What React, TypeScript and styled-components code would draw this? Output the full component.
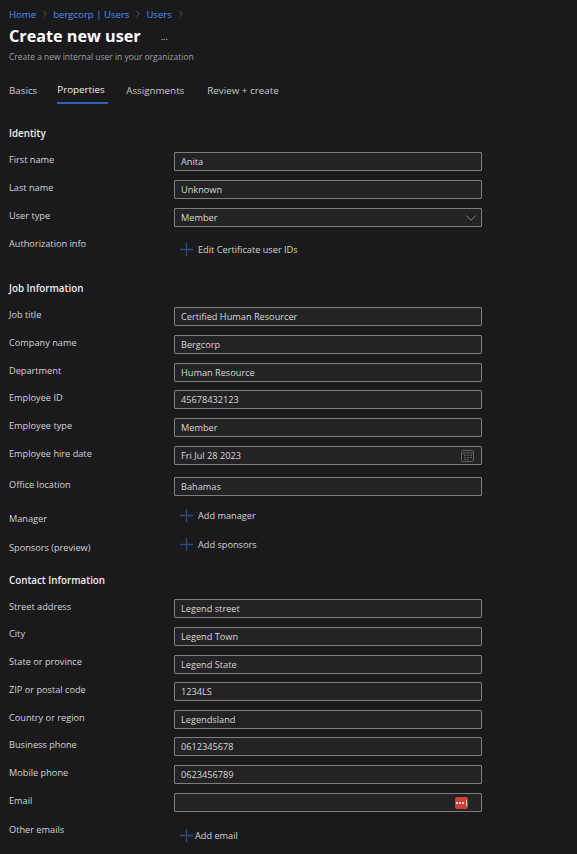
import styled, { createGlobalStyle } from 'styled-components';
import { ChevronDown, ChevronRight } from 'lucide-react';

const GlobalStyle = createGlobalStyle`
  html, body {
    margin: 0;
    background: #1a191c;
  }
  body {
    font-family: 'Open Sans', 'Noto Sans', sans-serif;
    color: #e4e4e4;
  }
`;

const Page = styled.div`
  width: 577px;
  height: 854px;
  overflow: hidden;
  background: #1a191c;
`;

const Breadcrumbs = styled.nav`
  display: flex;
  align-items: center;
  height: 14px;
  padding: 7px 0 0 9px;
  font-size: 9.6px;
  color: #4a8cf0;
`;

const Crumb = styled.span`
  display: flex;
  align-items: center;
  gap: 4px;
  margin-right: 3px;
  svg {
    color: #8a8a8a;
  }
`;

const TitleRow = styled.div`
  display: flex;
  align-items: center;
  height: 24px;
  margin-top: 3px;
  padding-left: 9px;
`;

const Title = styled.h1`
  margin: 0;
  font-size: 16.2px;
  font-weight: 700;
  color: #ffffff;
`;

const Ellipsis = styled.span`
  margin-left: 20px;
  font-size: 9px;
  line-height: 9px;
  color: #d0d0d0;
`;

const Subtitle = styled.div`
  height: 12px;
  margin-top: 3px;
  padding-left: 9px;
  font-size: 8.45px;
  line-height: 12px;
  color: #a0a0a0;
`;

const Tabs = styled.div`
  display: flex;
  height: 33px;
  margin-top: 12px;
  padding-left: 9px;
`;

const Tab = styled.div<{ $active?: boolean; $gap: number }>`
  display: flex;
  align-items: center;
  box-sizing: border-box;
  height: 29px;
  margin-right: ${p => p.$gap}px;
  padding: 3px ${p => (p.$active ? 3 : 0)}px ${p => (p.$active ? 2 : 0)}px 0;
  font-size: 9.8px;
  color: ${p => (p.$active ? '#f2f2f2' : '#c8c8c8')};
  font-weight: ${p => (p.$active ? 500 : 400)};
  border-bottom: 2px solid ${p => (p.$active ? '#2f62b8' : 'transparent')};
`;

const SectionTitle = styled.h2<{ $top: number }>`
  margin: ${p => p.$top}px 0 0;
  padding-left: 9px;
  height: 14px;
  font-size: 9.8px;
  line-height: 14px;
  font-weight: 600;
  color: #eeeeee;
`;

const Row = styled.div<{ $top: number }>`
  display: grid;
  grid-template-columns: 165px 308px;
  padding-left: 9px;
  margin-top: ${p => p.$top}px;
  height: 19px;
`;

const Label = styled.div<{ $shift: number }>`
  font-size: 9.2px;
  line-height: 14px;
  color: #d4d4d4;
  transform: translateY(${p => p.$shift}px);
`;

const Field = styled.div`
  display: flex;
  align-items: center;
  justify-content: space-between;
  box-sizing: border-box;
  height: 19px;
  padding: 0 7px 0 6px;
  background: #232225;
  border: 1px solid #7d7d7d;
  border-radius: 1px;
  font-size: 9.2px;
  color: #d8d8d8;
`;

const AddAction = styled.div<{ $gap: number }>`
  display: flex;
  align-items: center;
  gap: ${p => p.$gap}px;
  height: 19px;
  padding-left: 6px;
  font-size: 9.2px;
  color: #d4d4d4;
`;

const SelectChevron = styled(ChevronDown)`
  margin-right: -6px;
  color: #b5b5b5;
`;

const PasswordBadge = styled.span`
  display: flex;
  align-items: center;
  justify-content: center;
  gap: 1px;
  width: 13px;
  height: 12px;
  margin-right: 6px;
  border-radius: 2px;
  background: #cc3f3a;
`;

const Dot = styled.i`
  width: 2px;
  height: 2px;
  border-radius: 50%;
  background: #ffffff;
`;

const Bar = styled.i`
  width: 1px;
  height: 6px;
  margin-left: 1px;
  background: #f0b8b5;
`;

function PlusIcon() {
  return (
    <svg width="13" height="13" viewBox="0 0 13 13" fill="none" stroke="#284a85" strokeWidth="1.3">
      <path d="M6.5 0v13M0 6.5h13" />
    </svg>
  );
}

function CalendarIcon() {
  return (
    <svg width="13" height="13" viewBox="0 0 13 13" fill="none" stroke="#5f5f5f" strokeWidth="1">
      <rect x="0.5" y="1.5" width="12" height="11" rx="1" />
      <path d="M0.5 4h12M3 6.5h2M6 6.5h2M9 6.5h2M3 8.5h2M6 8.5h2M9 8.5h2M3 10.5h2M6 10.5h2" />
    </svg>
  );
}

type RowData = {
  label: string;
  top: number;
  shift?: number;
  value?: string;
  add?: string;
  addGap?: number;
  kind?: 'select' | 'date' | 'password';
};

const identity: RowData[] = [
  { label: 'First name', top: 11, value: 'Anita' },
  { label: 'Last name', top: 9, value: 'Unknown' },
  { label: 'User type', top: 9, value: 'Member', kind: 'select' },
  { label: 'Authorization info', top: 13, shift: -3, add: 'Edit Certificate user IDs' },
];

const job: RowData[] = [
  { label: 'Job title', top: 11, value: 'Certified Human Resourcer' },
  { label: 'Company name', top: 9, value: 'Bergcorp' },
  { label: 'Department', top: 9, value: 'Human Resource' },
  { label: 'Employee ID', top: 8, value: '45678432123' },
  { label: 'Employee type', top: 9, value: 'Member' },
  { label: 'Employee hire date', top: 9, value: 'Fri Jul 28 2023', kind: 'date' },
  { label: 'Office location', top: 12, value: 'Bahamas' },
  { label: 'Manager', top: 10, shift: 6, add: 'Add manager' },
  { label: 'Sponsors (preview)', top: 10, shift: 6, add: 'Add sponsors' },
];

const contact: RowData[] = [
  { label: 'Street address', top: 11, value: 'Legend street' },
  { label: 'City', top: 9, value: 'Legend Town', shift: 0 },
  { label: 'State or province', top: 9, value: 'Legend State', shift: 0 },
  { label: 'ZIP or postal code', top: 8, value: '1234LS' },
  { label: 'Country or region', top: 9, value: 'Legendsland' },
  { label: 'Business phone', top: 8, value: '0612345678' },
  { label: 'Mobile phone', top: 9, value: '0623456789' },
  { label: 'Email', top: 9, value: '', kind: 'password' },
  { label: 'Other emails', top: 14, shift: -3, add: 'Add email', addGap: 2 },
];

function FormRow({ row }: { row: RowData }) {
  return (
    <Row $top={row.top}>
      <Label $shift={row.shift ?? 1}>{row.label}</Label>
      {row.add ? (
        <AddAction $gap={row.addGap ?? 5}>
          <PlusIcon />
          {row.add}
        </AddAction>
      ) : (
        <Field>
          <span>{row.value}</span>
          {row.kind === 'select' && <SelectChevron size={18} strokeWidth={0.9} />}
          {row.kind === 'date' && <CalendarIcon />}
          {row.kind === 'password' && (
            <PasswordBadge>
              <Dot />
              <Dot />
              <Dot />
              <Bar />
            </PasswordBadge>
          )}
        </Field>
      )}
    </Row>
  );
}

export default function App() {
  return (
    <Page>
      <GlobalStyle />
      <Breadcrumbs>
        {['Home', 'bergcorp | Users', 'Users'].map(item => (
          <Crumb key={item}>
            {item}
            <ChevronRight size={10} strokeWidth={1.2} />
          </Crumb>
        ))}
      </Breadcrumbs>
      <TitleRow>
        <Title>Create new user</Title>
        <Ellipsis>...</Ellipsis>
      </TitleRow>
      <Subtitle>Create a new internal user in your organization</Subtitle>
      <Tabs>
        <Tab $gap={20}>Basics</Tab>
        <Tab $gap={18.5} $active>Properties</Tab>
        <Tab $gap={23}>Assignments</Tab>
        <Tab $gap={0}>Review + create</Tab>
      </Tabs>
      <SectionTitle $top={19}>Identity</SectionTitle>
      {identity.map(row => (
        <FormRow key={row.label} row={row} />
      ))}
      <SectionTitle $top={23}>Job Information</SectionTitle>
      {job.map(row => (
        <FormRow key={row.label} row={row} />
      ))}
      <SectionTitle $top={20}>Contact Information</SectionTitle>
      {contact.map(row => (
        <FormRow key={row.label} row={row} />
      ))}
    </Page>
  );
}
